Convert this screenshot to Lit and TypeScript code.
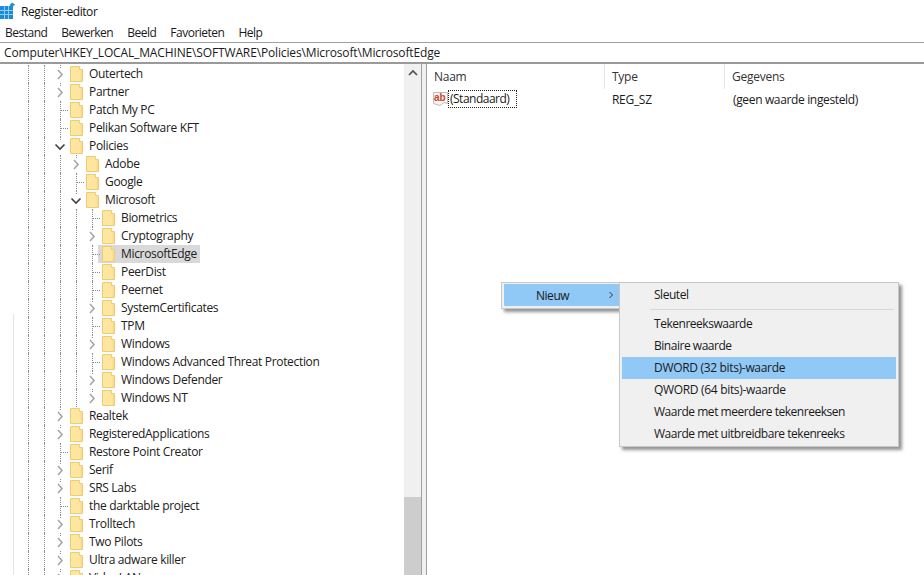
import { LitElement, html, css, svg } from "lit";
import { customElement } from "lit/decorators.js";

type Row = { t: string; d: number; k: "c" | "e" | "l"; sel?: boolean };
const rows: Row[] = [
  { t: "Outertech", d: 0, k: "c" },
  { t: "Partner", d: 0, k: "c" },
  { t: "Patch My PC", d: 0, k: "l" },
  { t: "Pelikan Software KFT", d: 0, k: "l" },
  { t: "Policies", d: 0, k: "e" },
  { t: "Adobe", d: 1, k: "c" },
  { t: "Google", d: 1, k: "l" },
  { t: "Microsoft", d: 1, k: "e" },
  { t: "Biometrics", d: 2, k: "l" },
  { t: "Cryptography", d: 2, k: "c" },
  { t: "MicrosoftEdge", d: 2, k: "l", sel: true },
  { t: "PeerDist", d: 2, k: "l" },
  { t: "Peernet", d: 2, k: "l" },
  { t: "SystemCertificates", d: 2, k: "c" },
  { t: "TPM", d: 2, k: "l" },
  { t: "Windows", d: 2, k: "c" },
  { t: "Windows Advanced Threat Protection", d: 2, k: "l" },
  { t: "Windows Defender", d: 2, k: "c" },
  { t: "Windows NT", d: 2, k: "c" },
  { t: "Realtek", d: 0, k: "c" },
  { t: "RegisteredApplications", d: 0, k: "c" },
  { t: "Restore Point Creator", d: 0, k: "l" },
  { t: "Serif", d: 0, k: "c" },
  { t: "SRS Labs", d: 0, k: "c" },
  { t: "the darktable project", d: 0, k: "l" },
  { t: "Trolltech", d: 0, k: "c" },
  { t: "Two Pilots", d: 0, k: "c" },
  { t: "Ultra adware killer", d: 0, k: "c" },
  { t: "VideoLAN", d: 0, k: "c" },
];

const folder = svg`<svg class="folder" width="13" height="16" viewBox="0 0 13 16">
  <path d="M0.5 0.5H9.5V3.5H12.5V15.5H0.5Z" fill="#fee6a0" stroke="#efcb75"/>
  <path d="M10.5 4.5H12V15H10.5Z" fill="#fbd987"/>
</svg>`;

const chevR = svg`<svg width="16" height="18" viewBox="0 0 16 18" class="chev"><path d="M6 5L10 9.5L6 14" fill="none" stroke="#a6a6a6" stroke-width="1.6"/></svg>`;
const chevD = svg`<svg width="16" height="18" viewBox="0 0 16 18" class="chev"><path d="M3.5 7.5L8 12L12.5 7.5" fill="none" stroke="#404040" stroke-width="1.6"/></svg>`;

@customElement("app-root")
export class AppRoot extends LitElement {
  static styles = css`
    :host {
      display: block;
      width: 924px;
      height: 575px;
      overflow: hidden;
      background: #fff;
      position: relative;
      font-family: "Open Sans", "Noto Sans", sans-serif;
      font-size: 12px;
      color: #1a1a1a;
    }
    .title { height: 22px; display: flex; align-items: center; gap: 5px; font-size: 12px; color: #111; letter-spacing: -0.42px; }
    .title svg { margin-top: -2px; flex: none; }
    .menu { height: 20px; display: flex; gap: 14px; padding-left: 5px; align-items: center; letter-spacing: -0.5px; }
    .addr { height: 19px; border-top: 1px solid #a0a0a0; border-bottom: 2px solid #9a9a9a; display: flex; align-items: center; padding-left: 4px; letter-spacing: -0.14px; white-space: nowrap; }
    .panes { display: flex; height: 512px; }
    .left { width: 404px; position: relative; overflow: hidden; flex: none; padding-top: 1px; box-sizing: border-box; }
    .edge { position: absolute; left: 13px; top: 250px; bottom: 0; width: 1px; background: #e4e4e4; }
    .row { height: 18px; display: flex; align-items: center; padding-left: 20px; }
    .cell { width: 16px; height: 18px; flex: none; position: relative; }
    .cell.g::before { content: ""; position: absolute; left: 8px; top: 0; bottom: 0; border-left: 1px dotted #8c8c8c; }
    .cell.ch::before { content: ""; position: absolute; left: 8px; top: 0; height: 3px; border-left: 1px dotted #8c8c8c; }
    .cell.lf::before { content: ""; position: absolute; left: 8px; top: 0; bottom: 0; border-left: 1px dotted #8c8c8c; }
    .cell.lf::after { content: ""; position: absolute; left: 9px; top: 9px; width: 7px; border-top: 1px dotted #8c8c8c; }
    .chev { position: absolute; left: 0; top: 0; }
    .folder { flex: none; margin-left: 2px; display: block; position: relative; z-index: 1; }
    .label { margin-left: 3px; padding: 0 3px; height: 18px; line-height: 17px; white-space: nowrap; letter-spacing: -0.33px; color: #202020; }
    .sel { background: #d9d9d9; margin-left: -17px; padding-left: 23px; }
    .sb { width: 17px; flex: none; background: #f0f0f0; display: flex; flex-direction: column; }
    .sb .arrow { height: 17px; display: flex; justify-content: center; align-items: center; }
    .sb .sp1 { height: 416px; }
    .sb .thumb { flex: 1; background: #cdcdcd; }
    .split { width: 4px; flex: none; background: #f0f0f0; border-left: 1px solid #a0a0a0; border-right: 1px solid #a0a0a0; }
    .right { flex: 1; min-width: 0; }
    .head { display: flex; height: 26px; }
    .hc { height: 25px; line-height: 26px; padding-left: 7px; box-sizing: border-box; border-right: 1px solid #e5e5e5; letter-spacing: -0.25px; color: #333; }
    .hc.n { width: 178px; }
    .hc.t { width: 120px; }
    .hc.g2 { border-right: none; flex: 1; padding-left: 7px; }
    .val { display: flex; height: 18px; align-items: center; position: relative; }
    .val svg { margin-left: 6px; flex: none; }
    .stand { border: 1px dotted #222; height: 18px; line-height: 16px; box-sizing: border-box; padding: 0 1px; width: 69px; letter-spacing: -0.5px; margin-left: -1px; white-space: nowrap; }
    .vt { margin-left: 95px; width: 121px; letter-spacing: -0.3px; }
    .vd { letter-spacing: -0.35px; }
    .menu1, .menu2 { position: absolute; background: #f0f0f0; border: 1px solid #c8c8c8; box-sizing: border-box; box-shadow: 3px 3px 3px rgba(60,60,60,.55); letter-spacing: -0.47px; color: #1a1a1a; }
    .menu1 { left: 501px; top: 282px; width: 129px; height: 27px; padding: 1px 2px; }
    .nw { height: 22px; background: #90c8f6; display: flex; align-items: center; padding-left: 32px; margin-right: 8px; position: relative; }
    .nw svg { position: absolute; right: 5px; top: 7px; }
    .menu2 { left: 619px; top: 282px; width: 280px; height: 165px; padding: 1px 2px; }
    .mi { height: 22px; line-height: 21px; padding-left: 32px; }
    .mi.on { background: #90c8f6; }
    .mi.caps { letter-spacing: -0.32px; }
    .sep { height: 1px; background: #d7d7d7; margin: 3px 2px 3px 28px; }
  `;

  private guides(r: Row) {
    const cells = [html`<span class="cell g"></span>`, html`<span class="cell g"></span>`];
    for (let d = 0; d < r.d; d++) cells.push(html`<span class="cell g"></span>`);
    if (r.k === "c") cells.push(html`<span class="cell ch">${chevR}</span>`);
    else if (r.k === "e") cells.push(html`<span class="cell ch">${chevD}</span>`);
    else cells.push(html`<span class="cell lf"></span>`);
    return cells;
  }

  render() {
    return html`
      <div class="title">
        <svg width="16" height="17" viewBox="0 0 16 17">
          <rect x="0" y="4" width="13" height="13" fill="#1c8ad6"/>
          <path d="M0 8.5H13M0 12.5H13M4.5 4V17M8.5 4V17" stroke="#8fcdf2" stroke-width="1"/>
          <path d="M12 0.5L15 2.5L12 5.5L9.5 3Z" fill="#2b8fc9"/>
        </svg>
        <span>Register-editor</span>
      </div>
      <div class="menu">
        <span>Bestand</span><span>Bewerken</span><span>Beeld</span><span>Favorieten</span><span>Help</span>
      </div>
      <div class="addr">Computer\\HKEY_LOCAL_MACHINE\\SOFTWARE\\Policies\\Microsoft\\MicrosoftEdge</div>
      <div class="panes">
        <div class="left">
          <div class="edge"></div>
          ${rows.map(
            (r) => html`<div class="row">
              ${this.guides(r)} ${folder}
              <span class="label ${r.sel ? "sel" : ""}">${r.t}</span>
            </div>`
          )}
        </div>
        <div class="sb">
          <div class="arrow">
            <svg width="10" height="7" viewBox="0 0 10 7"><path d="M1 6L5 2L9 6" fill="none" stroke="#505050" stroke-width="1.7"/></svg>
          </div>
          <div class="sp1"></div>
          <div class="thumb"></div>
        </div>
        <div class="split"></div>
        <div class="right">
          <div class="head">
            <div class="hc n">Naam</div>
            <div class="hc t">Type</div>
            <div class="hc g2">Gegevens</div>
          </div>
          <div class="val">
            <svg width="16" height="16" viewBox="0 0 16 16">
              <path d="M0.5 1.5H14.5V12.5L11 11.5L7 14.5L0.5 12.5Z" fill="#f6f6f6" stroke="#bdbdbd"/>
              <text x="1" y="10" font-size="10" font-weight="700" fill="#d0452a" font-family="Liberation Sans">ab</text>
            </svg>
            <span class="stand">(Standaard)</span>
            <span class="vt">REG_SZ</span>
            <span class="vd">(geen waarde ingesteld)</span>
          </div>
        </div>
      </div>
      <div class="menu1">
        <div class="nw">Nieuw
          <svg width="6" height="8" viewBox="0 0 6 8"><path d="M1.5 1L4.5 4L1.5 7" fill="none" stroke="#333" stroke-width="1"/></svg>
        </div>
      </div>
      <div class="menu2">
        <div class="mi">Sleutel</div>
        <div class="sep"></div>
        <div class="mi">Tekenreekswaarde</div>
        <div class="mi">Binaire waarde</div>
        <div class="mi on caps">DWORD (32 bits)-waarde</div>
        <div class="mi caps">QWORD (64 bits)-waarde</div>
        <div class="mi">Waarde met meerdere tekenreeksen</div>
        <div class="mi">Waarde met uitbreidbare tekenreeks</div>
      </div>
    `;
  }
}
